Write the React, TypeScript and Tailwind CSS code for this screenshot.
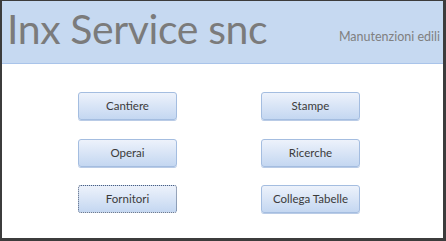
const buttons = [
  ["Cantiere", "Stampe"],
  ["Operai", "Ricerche"],
  ["Fornitori", "Collega Tabelle"],
];

function MenuButton({ label, focused }: { label: string; focused?: boolean }) {
  return (
    <button
      className={
        "flex h-[28px] w-[99px] items-center justify-center rounded-[3px] bg-gradient-to-b from-[#edf2fb] to-[#c4d7f1] text-[11.5px] text-[#3b3b3b] " +
        (focused
          ? "border border-dotted border-[#4d5f7d]"
          : "border border-[#a4bde0] shadow-[0_1px_0_#b9cbe6]")
      }
    >
      {label}
    </button>
  );
}

export default function App() {
  return (
    <div
      className="flex h-[241px] w-[446px] flex-col overflow-hidden border-t border-r-[3px] border-b-[3px] border-l-2 border-[#3c3c3c] bg-white"
      style={{ fontFamily: "Lato, 'Open Sans', sans-serif" }}
    >
      <div className="flex h-[63px] shrink-0 items-end justify-between border-b border-[#a9c4ea] bg-[#c6d9f1] pr-[3px] pl-[5px]">
        <h1 className="mb-[14px] text-[41px] leading-none font-normal tracking-[-0.4px] text-[#7b7b7b]">
          Inx Service snc
        </h1>
        <span className="mb-[20px] text-[12.5px] leading-none text-[#808080]">
          Manutenzioni edili
        </span>
      </div>
      <div className="flex flex-1 items-start pt-[28px] pl-[76px]">
        <div className="grid grid-cols-[99px_99px] gap-x-[84px] gap-y-[18.5px]">
          {buttons.map(([a, b]) => [
            <MenuButton key={a} label={a} focused={a === "Fornitori"} />,
            <MenuButton key={b} label={b} />,
          ])}
        </div>
      </div>
    </div>
  );
}
